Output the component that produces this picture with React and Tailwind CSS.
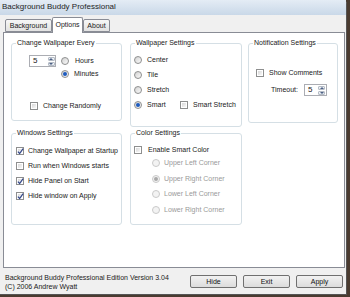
import React from "react";

const Radio = ({ checked, disabled }) => (
  <span
    className={`flex h-[8px] w-[8px] shrink-0 items-center justify-center rounded-full border ${
      disabled ? "border-[#cacaca] bg-[#f3f3f3]" : "border-[#8e8f8f] bg-gradient-to-br from-[#d2d2d2] to-[#fbfbfb]"
    }`}
  >
    {checked && (
      <span className={`h-[4px] w-[4px] rounded-full ${disabled ? "bg-[#a9a9a9]" : "bg-[#1d5bbf]"}`} />
    )}
  </span>
);

const Check = ({ checked }) => (
  <span className="flex h-[8px] w-[8px] shrink-0 border border-[#8e8f8f] bg-white p-[1px]">
    <span className="flex h-full w-full items-center justify-center bg-gradient-to-br from-[#d8d8d8] to-[#f8f8f8]">
      {checked && (
        <svg viewBox="0 0 8 8" className="h-[7px] w-[7px] overflow-visible">
          <path d="M1 4.2 L3 6.3 L7 0.8" fill="none" stroke="#34488a" strokeWidth="1.4" />
        </svg>
      )}
    </span>
  </span>
);

const Spin = ({ value, w }) => (
  <span className={`flex h-[12px] ${w} border border-[#abadb3] bg-white`}>
    <span className="flex-1 pl-[3px] text-[8px] leading-[10px]">{value}</span>
    <span className="flex w-[8px] flex-col gap-[1px] p-[0.5px]">
      <span className="flex flex-1 items-center justify-center rounded-[1px] border border-[#b5bcc6] bg-gradient-to-b from-[#f6f8fa] to-[#dde3ea]">
        <svg viewBox="0 0 4 2" className="h-[2px] w-[4px]">
          <path d="M0 2 L2 0 L4 2 Z" fill="#4d6185" />
        </svg>
      </span>
      <span className="flex flex-1 items-center justify-center rounded-[1px] border border-[#b5bcc6] bg-gradient-to-b from-[#f6f8fa] to-[#dde3ea]">
        <svg viewBox="0 0 4 2" className="h-[2px] w-[4px]">
          <path d="M0 0 L4 0 L2 2 Z" fill="#4d6185" />
        </svg>
      </span>
    </span>
  </span>
);

const Box = ({ legend, className, children }) => (
  <fieldset className={`rounded-[3px] border border-[#d5dfe5] ${className}`}>
    <legend className="ml-[4px] px-[1px] leading-[10px]">{legend}</legend>
    {children}
  </fieldset>
);

const Row = ({ className = "", children }) => (
  <div className={`flex h-[10px] items-center leading-[10px] ${className}`}>{children}</div>
);

const Btn = ({ children }) => (
  <button className="h-[13px] w-[47px] rounded-[2px] border border-[#707070] bg-gradient-to-b from-[#f2f2f2] to-[#dcdcdc] text-[7px] leading-[11px] text-[#111]">
    {children}
  </button>
);

export default function App() {
  return (
    <div className="h-[297px] w-[350px] overflow-hidden bg-[#4a3b30] font-['Liberation_Sans',Arial,sans-serif] text-[7px] text-[#1a1a1a]">
      <div className="flex h-[295px] w-[347px] flex-col rounded-tr-[4px] border-r border-b border-[#555] bg-[#f0f0f0]">
        {/* title bar */}
        <div className="h-[15px] bg-gradient-to-b from-[#e4ecf5] to-[#c9d8e8] pl-[2px] pt-[2px] text-[8px] leading-[10px] text-[#1e1e1e]">
          Background Buddy Professional
        </div>

        {/* tabs */}
        <div className="mt-[2px] flex h-[15px] items-end pl-[5px]">
          <div className="h-[13px] w-[47px] rounded-t-[2px] border border-[#898c95] bg-gradient-to-b from-[#f7f7f7] to-[#e2e2e2] text-center leading-[12px]">
            Background
          </div>
          <div className="relative z-10 mb-[-1px] h-[16px] w-[31px] rounded-t-[2px] border border-b-0 border-[#898c95] bg-white text-center leading-[13px]">
            Options
          </div>
          <div className="h-[13px] w-[27px] rounded-t-[2px] border border-[#898c95] bg-gradient-to-b from-[#f7f7f7] to-[#e2e2e2] text-center leading-[12px]">
            About
          </div>
        </div>

        {/* tab panel */}
        <div className="ml-[3px] h-[236px] w-[342px] border border-[#898c95] bg-white pl-[7px] pt-[5px]">
          <div className="flex h-[90px] items-start">
            <Box legend="Change Wallpaper Every" className="h-[83px] w-[111px]">
              <div className="mt-[7px] flex h-[12px] items-center pl-[17px]">
                <Spin value="5" w="w-[27px]" />
                <span className="ml-[5px]">
                  <Radio />
                </span>
                <span className="ml-[6px]">Hours</span>
              </div>
              <Row className="mt-[2px] pl-[49px]">
                <Radio checked />
                <span className="ml-[5px]">Minutes</span>
              </Row>
              <Row className="mt-[22px] pl-[18px]">
                <Check />
                <span className="ml-[5px]">Change Randomly</span>
              </Row>
            </Box>

            <Box legend="Wallpaper Settings" className="ml-[8px] h-[89px] w-[112px]">
              <div className="mt-[7px] flex flex-col gap-[5px] pl-[3px]">
                <Row>
                  <Radio />
                  <span className="ml-[5px]">Center</span>
                </Row>
                <Row>
                  <Radio />
                  <span className="ml-[5px]">Tile</span>
                </Row>
                <Row>
                  <Radio />
                  <span className="ml-[5px]">Stretch</span>
                </Row>
                <Row>
                  <Radio checked />
                  <span className="ml-[5px] w-[33px]">Smart</span>
                  <Check />
                  <span className="ml-[5px]">Smart Stretch</span>
                </Row>
              </div>
            </Box>

            <Box legend="Notification Settings" className="ml-[6px] h-[85px] w-[90px]">
              <Row className="mt-[20px] pl-[7px]">
                <Check />
                <span className="ml-[5px]">Show Comments</span>
              </Row>
              <div className="mt-[6px] flex h-[12px] items-center pl-[22px]">
                <span>Timeout:</span>
                <span className="ml-[6px]">
                  <Spin value="5" w="w-[23px]" />
                </span>
              </div>
            </Box>
          </div>

          <div className="flex items-start">
            <Box legend="Windows Settings" className="h-[97px] w-[111px]">
              <div className="mt-[8px] flex flex-col gap-[5px] pl-[4px]">
                <Row>
                  <Check checked />
                  <span className="ml-[4px]">Change Wallpaper at Startup</span>
                </Row>
                <Row>
                  <Check />
                  <span className="ml-[4px]">Run when Windows starts</span>
                </Row>
                <Row>
                  <Check checked />
                  <span className="ml-[4px]">Hide Panel on Start</span>
                </Row>
                <Row>
                  <Check checked />
                  <span className="ml-[4px]">Hide window on Apply</span>
                </Row>
              </div>
            </Box>

            <Box legend="Color Settings" className="ml-[8px] h-[97px] w-[112px]">
              <Row className="mt-[7px] pl-[3px]">
                <Check />
                <span className="ml-[6px]">Enable Smart Color</span>
              </Row>
              <div className="mt-[3px] flex flex-col gap-[5.5px] pl-[21px] text-[#9a9a9a]">
                <Row>
                  <Radio disabled />
                  <span className="ml-[4px]">Upper Left Corner</span>
                </Row>
                <Row>
                  <Radio checked disabled />
                  <span className="ml-[4px]">Upper Right Corner</span>
                </Row>
                <Row>
                  <Radio disabled />
                  <span className="ml-[4px]">Lower Left Corner</span>
                </Row>
                <Row>
                  <Radio disabled />
                  <span className="ml-[4px]">Lower Right Corner</span>
                </Row>
              </div>
            </Box>
          </div>
        </div>

        {/* status + buttons */}
        <div className="flex items-start justify-between pl-[5px] pr-[3px]">
          <div className="mt-[5px] leading-[9px]">
            <div>Background Buddy Professional Edition Version 3.04</div>
            <div>(C) 2006 Andrew Wyatt</div>
          </div>
          <div className="mt-[7px] flex gap-[6px]">
            <Btn>Hide</Btn>
            <Btn>Exit</Btn>
            <Btn>Apply</Btn>
          </div>
        </div>
      </div>
    </div>
  );
}
